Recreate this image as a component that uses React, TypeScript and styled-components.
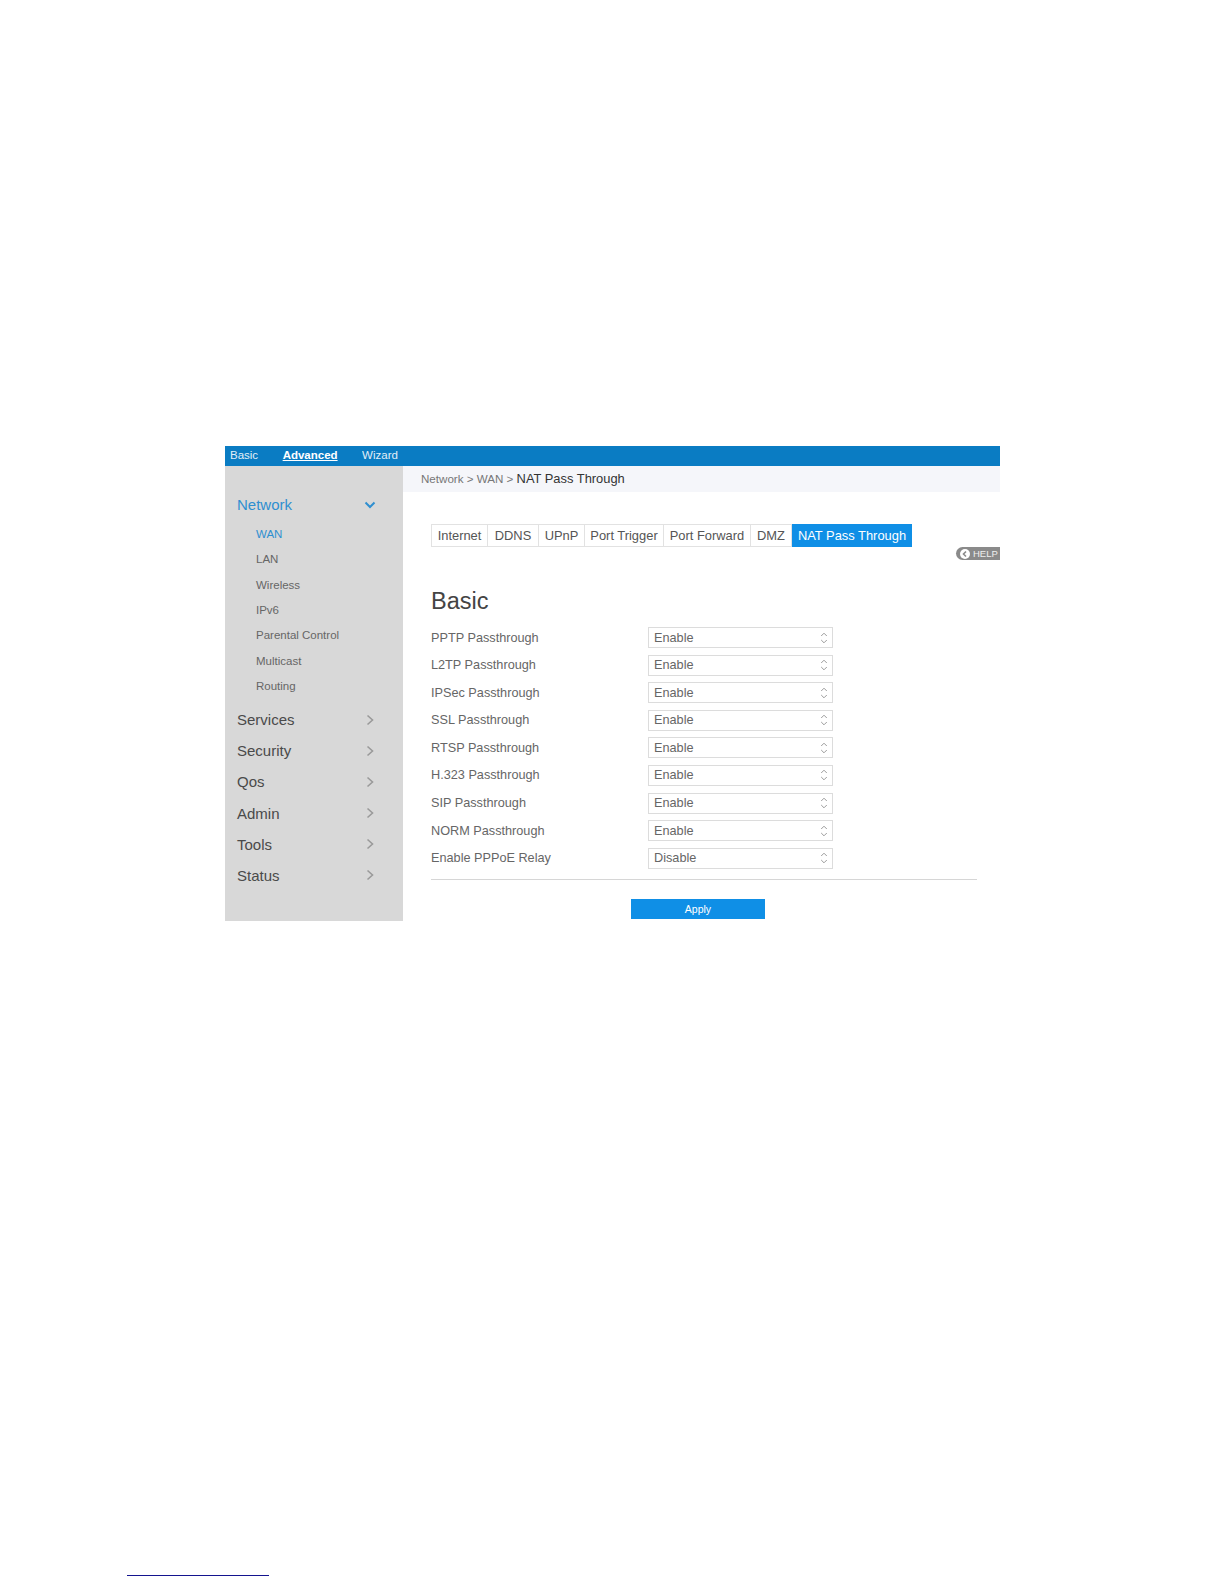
import { createGlobalStyle, styled } from "styled-components";

const GlobalStyle = createGlobalStyle`
  html, body {
    margin: 0;
    padding: 0;
    background: #fff;
    font-family: "Liberation Sans", Arial, sans-serif;
  }
`;

const tabs = [
  { label: "Internet", width: 56 },
  { label: "DDNS", width: 51 },
  { label: "UPnP", width: 46 },
  { label: "Port Trigger", width: 79 },
  { label: "Port Forward", width: 87 },
  { label: "DMZ", width: 41 },
  { label: "NAT Pass Through", width: 120, active: true },
];

const subMenu = ["WAN", "LAN", "Wireless", "IPv6", "Parental Control", "Multicast", "Routing"];
const mainMenu = ["Services", "Security", "Qos", "Admin", "Tools", "Status"];

const settings = [
  ["PPTP Passthrough", "Enable"],
  ["L2TP Passthrough", "Enable"],
  ["IPSec Passthrough", "Enable"],
  ["SSL Passthrough", "Enable"],
  ["RTSP Passthrough", "Enable"],
  ["H.323 Passthrough", "Enable"],
  ["SIP Passthrough", "Enable"],
  ["NORM Passthrough", "Enable"],
  ["Enable PPPoE Relay", "Disable"],
];

function Chevron({ open }: { open?: boolean }) {
  return (
    <svg width="12" height="12" viewBox="0 0 12 12" fill="none">
      <path
        d={open ? "M1.5 3.5 L6 8 L10.5 3.5" : "M3.5 1.5 L8.5 6 L3.5 10.5"}
        stroke={open ? "#2f8fd0" : "#9a9a9a"}
        strokeWidth={open ? 2 : 1.6}
      />
    </svg>
  );
}

export default function App() {
  return (
    <Page>
      <GlobalStyle />
      <Frame>
        <TopNav>
          <TopLink>Basic</TopLink>
          <TopLink $active>Advanced</TopLink>
          <TopLink>Wizard</TopLink>
        </TopNav>
        <Body>
          <Sidebar>
            <MenuHead $open>
              Network
              <Chevron open />
            </MenuHead>
            <SubList>
              {subMenu.map((item, i) => (
                <SubItem key={item} $active={i === 0}>{item}</SubItem>
              ))}
            </SubList>
            {mainMenu.map((item) => (
              <MenuHead key={item}>
                {item}
                <Chevron />
              </MenuHead>
            ))}
          </Sidebar>
          <Main>
            <Crumbs>
              Network &gt; WAN &gt; <b>NAT Pass Through</b>
            </Crumbs>
            <Content>
              <TabBar>
                {tabs.map((t) => (
                  <Tab key={t.label} $width={t.width} $active={t.active}>{t.label}</Tab>
                ))}
              </TabBar>
              <HelpBadge>
                <svg width="10" height="10" viewBox="0 0 10 10">
                  <circle cx="5" cy="5" r="5" fill="#fff" />
                  <path d="M6 2.5 L3.5 5 L6 7.5" stroke="#8a8a8a" strokeWidth="1.6" fill="none" />
                </svg>
                HELP
              </HelpBadge>
              <Heading>Basic</Heading>
              <Form>
                {settings.map(([label, value]) => (
                  <Row key={label}>
                    <Label>{label}</Label>
                    <Select>
                      {value}
                      <svg width="8" height="12" viewBox="0 0 8 12" fill="none">
                        <path d="M1.2 4 L4 1.2 L6.8 4 M1.2 8 L4 10.8 L6.8 8" stroke="#9c9c9c" strokeWidth="1" />
                      </svg>
                    </Select>
                  </Row>
                ))}
              </Form>
              <Divider />
              <ApplyRow>
                <ApplyButton>Apply</ApplyButton>
              </ApplyRow>
            </Content>
          </Main>
        </Body>
      </Frame>
      <FootRule />
    </Page>
  );
}

const Page = styled.div`
  height: 1584px;
  padding: 446px 0 0 225px;
  box-sizing: border-box;
  overflow: hidden;
`;

const Frame = styled.div`
  width: 775px;
  height: 475px;
  display: flex;
  flex-direction: column;
`;

const TopNav = styled.div`
  height: 20px;
  background: #0a7cc3;
  display: flex;
  align-items: center;
  padding: 0 0 3px 5px;
  box-sizing: border-box;
  gap: 24.5px;
  flex-shrink: 0;
`;

const TopLink = styled.span<{ $active?: boolean }>`
  color: #fff;
  opacity: ${(p) => (p.$active ? 1 : 0.88)};
  font-size: 11.5px;
  font-weight: ${(p) => (p.$active ? 700 : 400)};
  text-decoration: ${(p) => (p.$active ? "underline" : "none")};
`;

const Body = styled.div`
  flex: 1;
  display: flex;
  min-height: 0;
`;

const Sidebar = styled.div`
  width: 178px;
  flex-shrink: 0;
  background: #d8d8d8;
  padding: 23px 27px 0 12px;
  box-sizing: border-box;
`;

const MenuHead = styled.div<{ $open?: boolean }>`
  height: 31.2px;
  display: flex;
  align-items: center;
  justify-content: space-between;
  font-size: 15px;
  color: ${(p) => (p.$open ? "#2f8fd0" : "#4a4a4a")};
`;

const SubList = styled.div`
  padding: 1px 0 5px 19px;
`;

const SubItem = styled.div<{ $active?: boolean }>`
  height: 25.4px;
  display: flex;
  align-items: center;
  font-size: 11.5px;
  color: ${(p) => (p.$active ? "#2f8fd0" : "#666")};
`;

const Main = styled.div`
  flex: 1;
  min-width: 0;
`;

const Crumbs = styled.div`
  height: 26px;
  background: #f5f6fa;
  padding: 0 0 2px 18px;
  box-sizing: border-box;
  display: flex;
  align-items: center;
  white-space: pre;
  font-size: 11.6px;
  color: #777;

  b {
    font-weight: 400;
    font-size: 12.9px;
    color: #333;
  }
`;

const Content = styled.div`
  position: relative;
  padding: 32px 23px 0 28px;
`;

const TabBar = styled.div`
  display: flex;
  height: 23px;
  width: fit-content;
  border: 1px solid #e2e2e2;
  border-right: none;
  box-sizing: border-box;
`;

const Tab = styled.div<{ $width: number; $active?: boolean }>`
  width: ${(p) => p.$width}px;
  display: flex;
  align-items: center;
  justify-content: center;
  white-space: nowrap;
  font-size: 12.9px;
  margin: ${(p) => (p.$active ? "-1px 0" : 0)};
  color: ${(p) => (p.$active ? "#fff" : "#555")};
  background: ${(p) => (p.$active ? "#0f8fe6" : "transparent")};
  border-right: ${(p) => (p.$active ? "none" : "1px solid #e2e2e2")};
  box-sizing: border-box;
`;

const HelpBadge = styled.div`
  position: absolute;
  top: 55px;
  right: 0;
  width: 44px;
  height: 13px;
  box-sizing: border-box;
  padding-left: 4px;
  display: flex;
  align-items: center;
  gap: 3px;
  background: #8a8a8a;
  border-radius: 7px 0 0 7px;
  color: #eee;
  font-size: 9.5px;
`;

const Heading = styled.h2`
  margin: 39px 0 0;
  height: 30px;
  line-height: 30px;
  font-size: 23.5px;
  font-weight: 400;
  color: #444;
`;

const Form = styled.div`
  margin-top: 11px;
  display: flex;
  flex-direction: column;
  gap: 6.6px;
`;

const Row = styled.div`
  display: flex;
  align-items: center;
  height: 21px;
`;

const Label = styled.div`
  width: 217px;
  font-size: 12.7px;
  color: #666;
`;

const Select = styled.div`
  width: 185px;
  height: 21px;
  box-sizing: border-box;
  border: 1px solid #dcdcdc;
  padding: 0 4px 0 5px;
  display: flex;
  align-items: center;
  justify-content: space-between;
  font-size: 12.7px;
  color: #666;
`;

const Divider = styled.div`
  margin: 10.5px 0 0;
  height: 1px;
  background: #d6d6d6;
`;

const ApplyRow = styled.div`
  display: flex;
  padding: 19px 0 0 200px;
`;

const ApplyButton = styled.div`
  width: 134px;
  height: 20px;
  background: #0f8fe6;
  color: #fff;
  display: flex;
  align-items: center;
  justify-content: center;
  font-size: 10.5px;
`;

const FootRule = styled.div`
  width: 142px;
  height: 1px;
  margin: 654px 0 0 -98px;
  background: #14148f;
`;
